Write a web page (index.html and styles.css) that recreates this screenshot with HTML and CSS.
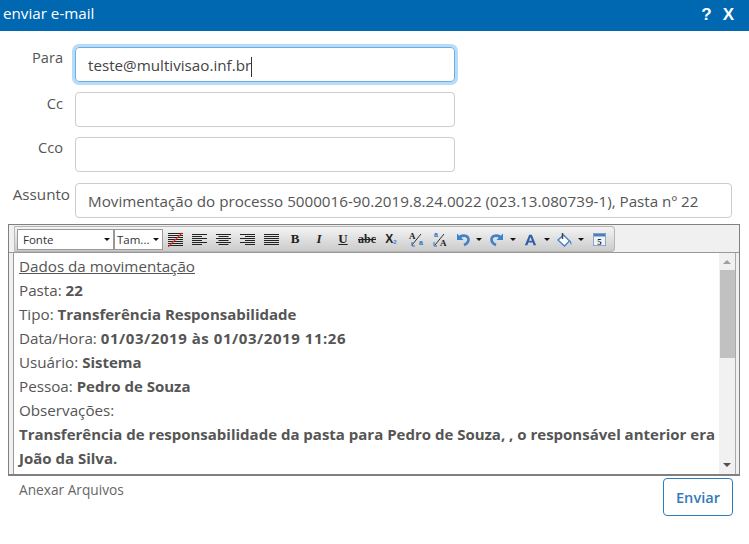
FILE: index.html
```html
<!DOCTYPE html>
<html lang="pt-BR">
<head>
<meta charset="utf-8">
<title>enviar e-mail</title>
<link rel="stylesheet" href="styles.css">
</head>
<body>
<header class="titlebar">
  <span class="title">enviar e-mail</span>
  <span class="actions"><span>?</span><span class="close">X</span></span>
</header>
<main class="form">
  <div class="row"><label class="lbl first">Para</label><div class="field short focus">teste@multivisao.inf.br<span class="caret"></span></div></div>
  <div class="row"><label class="lbl">Cc</label><div class="field short"></div></div>
  <div class="row extra"><label class="lbl tight">Cco</label><div class="field short"></div></div>
  <div class="row subject"><label class="lbl">Assunto</label><div class="field">Movimentação do processo 5000016-90.2019.8.24.0022 (023.13.080739-1), Pasta nº 22</div></div>
</main>
<section class="editor">
  <div class="toolbar-wrap">
    <div class="toolbar">
      <div class="combo fonte"><span>Fonte</span><i class="arrow"></i></div>
      <div class="combo tam"><span>Tam...</span><i class="arrow"></i></div>
      <span class="slot w24"><svg class="ic" viewBox="0 0 15 15"><path d="M0 1.500h15M0 3.500h15M0 5.500h15M0 7.500h15M0 9.500h15M0 11.500h15M0 13.500h15" stroke="#222" fill="none"/><path d="M0 15L14 1" stroke="#e0301e" stroke-width="1.200"/></svg></span>
      <span class="slot w24"><svg class="ic" viewBox="0 0 15 15"><path d="M0 2.500h15M0 4.500h10M0 6.500h15M0 8.500h10M0 10.500h15M0 12.500h10" stroke="#222" fill="none"/></svg></span>
      <span class="slot w24"><svg class="ic" viewBox="0 0 15 15"><path d="M0 2.500h15M2.500 4.500h10M0 6.500h15M2.500 8.500h10M0 10.500h15M2.500 12.500h10" stroke="#222" fill="none"/></svg></span>
      <span class="slot w24"><svg class="ic" viewBox="0 0 15 15"><path d="M0 2.500h15M5 4.500h10M0 6.500h15M5 8.500h10M0 10.500h15M5 12.500h10" stroke="#222" fill="none"/></svg></span>
      <span class="slot w24"><svg class="ic" viewBox="0 0 15 15"><path d="M0 2.500h15M0 4.500h15M0 6.500h15M0 8.500h15M0 10.500h15M0 12.500h15" stroke="#222" fill="none"/></svg></span>
      <span class="slot w24 tb b">B</span>
      <span class="slot w24 tb i">I</span>
      <span class="slot w24 tb u">U</span>
      <span class="slot w24 tb s">abc</span>
      <span class="slot w24 tb sub">X<small>2</small></span>
      <span class="slot w28"><svg class="ic big" viewBox="0 0 18 18"><text x="1" y="9" class="ta">A</text><path d="M4 15L13 4" stroke="#333"/><text x="11" y="15" class="tz">a</text><path d="M4 12v4h3" stroke="#2a6fc0" fill="none"/></svg></span>
      <span class="slot w20"><svg class="ic big" viewBox="0 0 18 18"><text x="2" y="7" class="tz">a</text><path d="M3 15L12 4" stroke="#333"/><text x="8" y="16" class="ta">A</text><path d="M2 12v4h3" stroke="#2a6fc0" fill="none"/></svg></span>
      <span class="slot w24"><svg class="ic" viewBox="0 0 15 15"><path d="M1 1.500V8h6.500z" fill="#3f7fd0"/><path d="M3 5.500C6 2.500 12.500 3 12.500 7.500c0 2.500-1.800 4.300-4.500 5.500" fill="none" stroke="#3f7fd0" stroke-width="2.600"/></svg></span>
      <span class="slot w8"><i class="arrow"></i></span>
      <span class="slot w26"><svg class="ic" viewBox="0 0 15 15"><path d="M14 1.500V8H7.500z" fill="#3f7fd0"/><path d="M12 5.500C9 2.500 2.500 3 2.500 7.500c0 2.500 1.800 4.300 4.500 5.500" fill="none" stroke="#3f7fd0" stroke-width="2.600"/></svg></span>
      <span class="slot w8"><i class="arrow"></i></span>
      <span class="slot w26"><svg class="ic small" viewBox="0 0 15 15"><path d="M1 14L6 2h3l5 12h-3l-1-3H5l-1 3zM5.800 9h3.400L7.500 4.500z" fill="#2f5fa8"/></svg></span>
      <span class="slot w8"><i class="arrow"></i></span>
      <span class="slot w26"><svg class="ic" viewBox="0 0 15 15"><path d="M1 8l5.500-5 6 6-5 5z" fill="#fff" stroke="#3f7fd0" stroke-width="1.300"/><path d="M5.500 1v6" stroke="#444" stroke-width="1.500"/><path d="M12.500 8c1.800 1 2.300 3 1.800 5-1-1-1.400-3-1.800-5z" fill="#3f7fd0"/></svg></span>
      <span class="slot w8"><i class="arrow"></i></span>
      <span class="slot w28"><svg class="ic small" viewBox="0 0 15 15"><rect x=".5" y=".5" width="14" height="14" fill="#eef3fa" stroke="#7d9cc4"/><rect x="1" y="1" width="13" height="3" fill="#4a7cc0"/><text x="7.500" y="13.500" class="five">5</text></svg></span>
    </div>
  </div>
  <div class="content">
    <div class="text">
      <p class="under">Dados da movimentação</p>
      <p>Pasta: <b>22</b></p>
      <p>Tipo: <b>Transferência Responsabilidade</b></p>
      <p>Data/Hora: <b class="nums">01/03/2019 às 01/03/2019 11:26</b></p>
      <p>Usuário: <b>Sistema</b></p>
      <p>Pessoa: <b>Pedro de Souza</b></p>
      <p>Observações:</p>
      <p><b>Transferência de responsabilidade da pasta para Pedro de Souza, , o responsável anterior era João da Silva.</b></p>
    </div>
    <div class="scroll"><i class="up"></i><div class="thumb"></div><i class="down"></i></div>
  </div>
</section>
<footer class="foot">
  <span class="attach">Anexar Arquivos</span>
  <button class="send" type="button">Enviar</button>
</footer>
</body>
</html>
```
FILE: styles.css
```css
* { box-sizing: border-box; }
html, body { margin: 0; padding: 0; }
body {
  width: 749px;
  height: 544px;
  overflow: hidden;
  background: #fff;
  color: #555;
  font-family: "Open Sans", "Liberation Sans", sans-serif;
  font-size: 15.2px;
}
.titlebar {
  height: 31px;
  background: #0067b1;
  color: #fff;
  display: flex;
  justify-content: space-between;
  padding: 3px 15px 0 3px;
}
.title { line-height: 20px; }
.actions { display: flex; gap: 11px; font-family: "Liberation Sans", sans-serif; font-weight: 700; font-size: 17px; line-height: 24px; }
.form { padding-top: 16px; }
.row { display: flex; height: 35px; margin-bottom: 10px; }
.row.extra { margin-bottom: 11px; }
.row.subject { margin-bottom: 0; }
.lbl { width: 63px; text-align: right; line-height: 20px; padding-top: 1px; flex: none; font-size: 14.6px; }
.lbl.first, .lbl.tight { padding-top: 0; }
.subject .lbl { width: 70px; font-size: 15.2px; }
.subject .field { margin-left: 5px; }
.field {
  margin-left: 12px;
  width: 657px;
  height: 35px;
  border: 1px solid #ccc;
  border-radius: 4px;
  padding: 0 12px;
  line-height: 35px;
  color: #555;
  white-space: nowrap;
}
.short { width: 380px; }
.focus {
  border-color: #66afe9;
  box-shadow: 0 0 0 3px rgba(102, 175, 233, .45);
  color: #444;
}
.caret { display: inline-block; width: 1px; height: 20px; background: #333; vertical-align: middle; }
.editor {
  margin: 6px 9px 0 8px;
  height: 252px;
  border: 1px solid #808080;
  border-bottom-width: 2px;
  background: #f0f0f0;
  padding-right: 3px;
}
.toolbar-wrap { height: 28px; border-bottom: 1px solid #999; margin-right: -3px; padding: 1px 0 0 5px; }
.toolbar {
  width: 601px;
  height: 26px;
  display: flex;
  align-items: center;
  border: 1px solid #b5b5b5;
  border-left: 1px solid #bbb;
  border-radius: 0 4px 4px 0;
  background: linear-gradient(#f4f4f4, #cbcbcb);
  padding-left: 2px;
  font-family: "Liberation Serif", serif;
}
.combo {
  height: 21px;
  flex: none;
  background: #fff;
  border: 1px solid #999;
  display: flex;
  align-items: center;
  justify-content: space-between;
  padding: 0 3px 0 5px;
  font-family: "Open Sans", sans-serif;
  font-size: 11.500px;
  color: #333;
}
.fonte { width: 97px; }
.tam { width: 49px; padding-left: 2px; }
.arrow { width: 0; height: 0; border: 3px solid transparent; border-top: 3px solid #111; border-bottom: 0; display: block; }
.slot { display: flex; align-items: center; justify-content: center; flex: none; height: 20px; }
.w8 { width: 8px; }
.w20 { width: 20px; }
.w24 { width: 24px; }
.w26 { width: 26px; }
.w28 { width: 28px; }
.ic { width: 15px; height: 15px; display: block; }
.ic.big { width: 18px; height: 18px; }
.ic.small { width: 13px; height: 13px; }
.tb { font-size: 13px; color: #222; }
.b { font-weight: 700; }
.i { font-style: italic; font-weight: 700; }
.u { text-decoration: underline; font-weight: 700; }
.s { text-decoration: line-through; font-size: 12px; font-weight: 700; }
.sub { font-family: "Liberation Sans", sans-serif; font-weight: 700; font-size: 12px; }
.sub small { font-size: 6px; color: #3f7fd0; margin-top: 6px; }
.ta { font: 700 9px "Liberation Serif", serif; fill: #222; }
.tz { font: 700 7px "Liberation Sans", sans-serif; fill: #2a6fc0; }
.five { font: 700 10px "Liberation Serif", serif; fill: #222; text-anchor: middle; }
.content {
  height: 221px;
  margin-left: 4px;
  background: #fff;
  border-left: 1px solid #999;
  border-right: 1px solid #aaa;
  display: flex;
  justify-content: space-between;
}
.text { width: 706px; padding: 1px 0 0 5px; color: #555; line-height: 24px; }
.text p { margin: 0; }
.text b { font-size: 15px; }
.text b.nums { letter-spacing: .55px; }
.under { text-decoration: underline; }
.scroll {
  width: 16px;
  background: #f1f1f1;
  display: flex;
  flex-direction: column;
  align-items: center;
}
.up { margin-top: 7px; border: 4px solid transparent; border-bottom: 4px solid #a0a0a0; border-top: 0; }
.down { margin-top: 105px; border: 4px solid transparent; border-top: 4px solid #505050; border-bottom: 0; }
.thumb { margin-top: 6px; width: 15px; height: 88px; background: #c1c1c1; }
.foot { display: flex; justify-content: space-between; align-items: flex-start; padding: 2px 16px 0 19px; }
.attach { line-height: 20px; margin-top: 2px; color: #666; font-size: 13.700px; }
.send {
  width: 70px;
  height: 38px;
  background: #fff;
  border: 1px solid #2e7cc0;
  border-radius: 4px;
  color: #337ab7;
  font: 600 14.600px "Open Sans", sans-serif;
  padding: 0;
}
```
